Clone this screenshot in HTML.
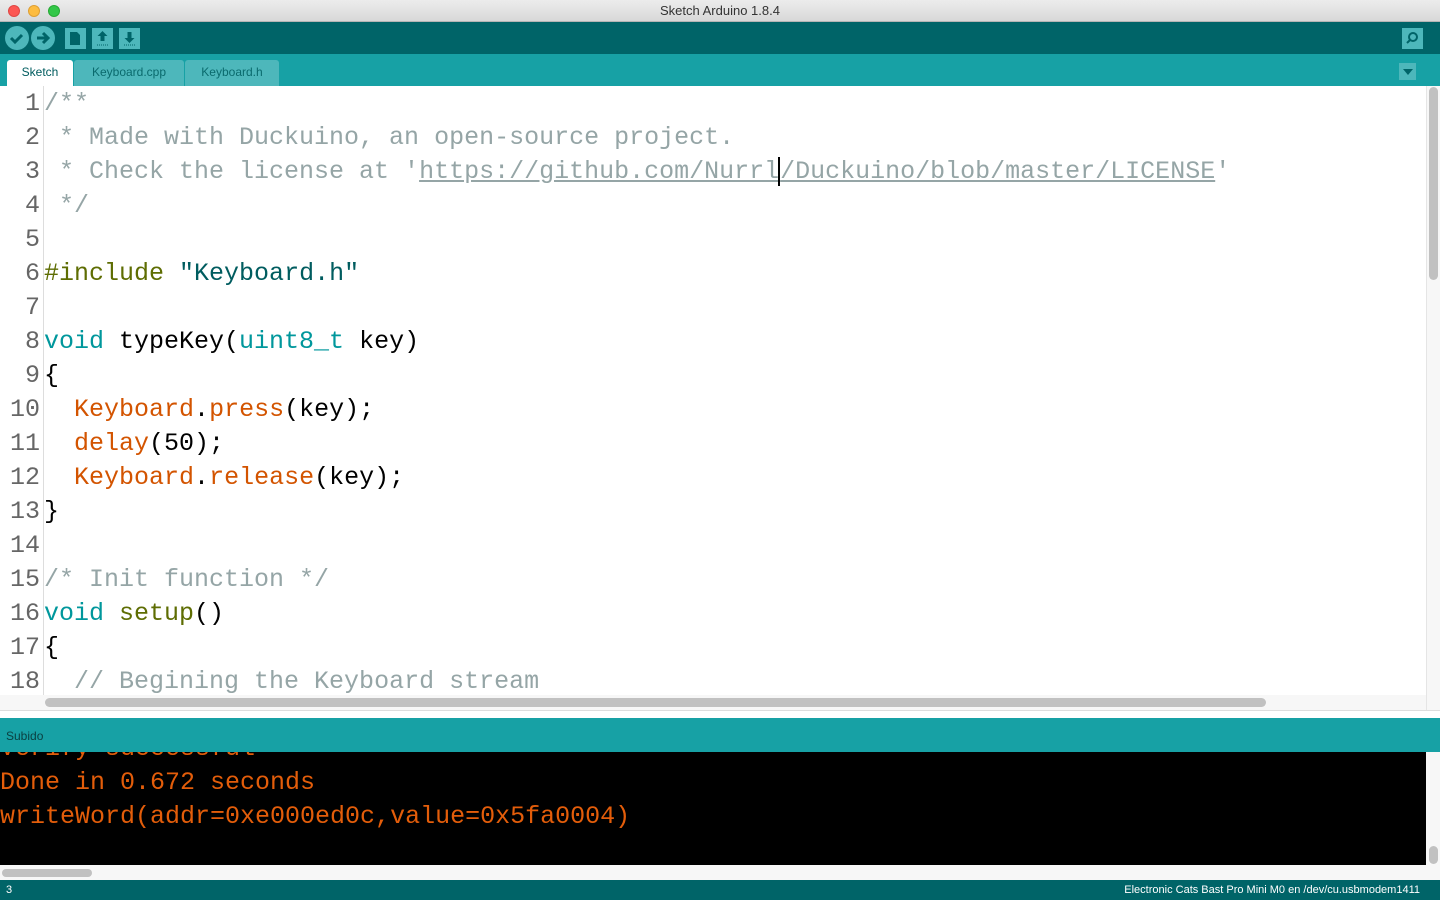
<!DOCTYPE html>
<html><head><meta charset="utf-8"><style>
*{margin:0;padding:0;box-sizing:border-box}
body{width:1440px;height:900px;overflow:hidden;background:#fff;font-family:"Liberation Sans",sans-serif;position:relative}
.title{position:absolute;top:0;left:0;width:1440px;height:22px;background:linear-gradient(#ececec,#d8d8d8);border-bottom:1px solid #b5b5b5;text-align:center;font-size:13px;line-height:22px;color:#333}
.dot{position:absolute;top:5px;width:12px;height:12px;border-radius:50%}
.tool{position:absolute;top:22px;left:0;width:1440px;height:32px;background:#006468}
.tabs{position:absolute;top:54px;left:0;width:1440px;height:32px;background:#17a1a5}
.tab{position:absolute;top:6px;height:26px;font-size:12px;line-height:24px;text-align:center;border-radius:3px 3px 0 0;color:#0a6a6d;background:#4db7bb}
.editor{position:absolute;top:86px;left:0;width:1426px;height:609px;overflow:hidden;background:#fff}
.gut{position:absolute;left:43px;top:0;width:1px;height:609px;background:#ddd}
.code{position:absolute;top:1px;left:0;font-family:"Liberation Mono",monospace;font-size:25px;line-height:34px;white-space:pre}
.ln{display:inline-block;width:40px;text-align:right;color:#666;margin-right:4px}
.c{color:#95a5a6}.k{color:#00979c}.f{color:#d35400}.p{color:#5e6d03}.s{color:#005c5f}
.cons{position:absolute;top:752px;left:0;width:1426px;height:113px;background:#000;overflow:hidden}
.cons pre{font-family:"Liberation Mono",monospace;font-size:25px;line-height:34px;color:#e35d0a;position:absolute;top:-20px;left:0}
</style></head><body>
<div class="title">Sketch Arduino 1.8.4
<div class="dot" style="left:8px;background:#fc5753;border:1px solid #df4744"></div>
<div class="dot" style="left:28px;background:#fdbc40;border:1px solid #de9f34"></div>
<div class="dot" style="left:48px;background:#33c748;border:1px solid #27aa35"></div>
</div>
<div class="tool">
<svg width="1440" height="32" style="position:absolute;left:0;top:0">
<circle cx="17" cy="16" r="12" fill="#4db7bb"/><path d="M11 16l4 4 7-7" stroke="#006468" stroke-width="3" fill="none"/>
<circle cx="43" cy="16" r="12" fill="#4db7bb"/><path d="M37 16h9M43 11l5 5-5 5" stroke="#006468" stroke-width="3" fill="none"/>
<rect x="65" y="6" width="21" height="21" fill="#4db7bb"/><path d="M70 10h7l3 3v10h-10z" fill="#006468"/>
<rect x="92" y="6" width="21" height="21" fill="#4db7bb"/><path d="M102.5 9l-5 5h3v5h4v-5h3z" fill="#006468"/><path d="M97 23h11" stroke="#006468" stroke-dasharray="1 1"/>
<rect x="119" y="6" width="21" height="21" fill="#4db7bb"/><path d="M129.5 21l-5-5h3v-6h4v6h3z" fill="#006468"/><path d="M124 23h11" stroke="#006468" stroke-dasharray="1 1"/>
<rect x="1402" y="6" width="21" height="21" fill="#4db7bb"/><circle cx="1413" cy="15" r="4" stroke="#006468" stroke-width="2" fill="none"/><path d="M1410 18l-3 3" stroke="#006468" stroke-width="2"/>
</svg></div>
<div class="tabs">
<div class="tab" style="left:7px;width:66px;background:#fff;color:#005c5f">Sketch</div>
<div class="tab" style="left:74px;width:110px">Keyboard.cpp</div>
<div class="tab" style="left:185px;width:94px">Keyboard.h</div>
<div style="position:absolute;left:1399px;top:9px;width:17px;height:17px;background:#4db7bb"></div>
<div style="position:absolute;left:1403px;top:15px;width:0;height:0;border-left:5px solid transparent;border-right:5px solid transparent;border-top:6px solid #006468"></div>
</div>
<div class="editor"><div class="gut"></div>
<div class="code"><span class="ln">1</span><span class="c">/**</span>
<span class="ln">2</span><span class="c"> * Made with Duckuino, an open-source project.</span>
<span class="ln">3</span><span class="c"> * Check the license at '<u>https://github.com/Nurrl</u><span style="border-left:2px solid #000;margin-left:-1px"></span><u>/Duckuino/blob/master/LICENSE</u>'</span>
<span class="ln">4</span><span class="c"> */</span>
<span class="ln">5</span>
<span class="ln">6</span><span class="p">#include</span> <span class="s">"Keyboard.h"</span>
<span class="ln">7</span>
<span class="ln">8</span><span class="k">void</span> typeKey(<span class="k">uint8_t</span> key)
<span class="ln">9</span>{
<span class="ln">10</span>  <span class="f">Keyboard</span>.<span class="f">press</span>(key);
<span class="ln">11</span>  <span class="f">delay</span>(50);
<span class="ln">12</span>  <span class="f">Keyboard</span>.<span class="f">release</span>(key);
<span class="ln">13</span>}
<span class="ln">14</span>
<span class="ln">15</span><span class="c">/* Init function */</span>
<span class="ln">16</span><span class="k">void</span> <span class="p">setup</span>()
<span class="ln">17</span>{
<span class="ln">18</span>  <span class="c">// Begining the Keyboard stream</span>
</div></div>
<div style="position:absolute;left:1426px;top:86px;width:14px;height:624px;background:#f7f7f7;border-left:1px solid #e5e5e5"></div>
<div style="position:absolute;left:1429px;top:87px;width:9px;height:193px;border-radius:5px;background:#c1c1c1"></div>
<div style="position:absolute;left:0;top:695px;width:1426px;height:15px;background:#f7f7f7"></div>
<div style="position:absolute;left:45px;top:698px;width:1221px;height:9px;border-radius:5px;background:#c1c1c1"></div>
<div style="position:absolute;left:0;top:710px;width:1440px;height:8px;background:#fff;border-top:1px solid #ddd"></div>
<div style="position:absolute;left:0;top:718px;width:1440px;height:34px;background:#17a1a5;font-size:12px;line-height:36px;padding-left:6px;color:#0b3f40">Subido</div>
<div class="cons"><pre>Verify successful
Done in 0.672 seconds
writeWord(addr=0xe000ed0c,value=0x5fa0004)</pre></div>
<div style="position:absolute;left:1426px;top:752px;width:14px;height:128px;background:#f7f7f7"></div>
<div style="position:absolute;left:1429px;top:846px;width:9px;height:18px;border-radius:5px;background:#c1c1c1"></div>
<div style="position:absolute;left:0;top:865px;width:1426px;height:15px;background:#f7f7f7"></div>
<div style="position:absolute;left:2px;top:869px;width:90px;height:8px;border-radius:4px;background:#c1c1c1"></div>
<div style="position:absolute;left:0;top:880px;width:1440px;height:20px;background:#006468;color:#fff;font-size:11px;line-height:21px">
<span style="position:absolute;left:6px">3</span>
<span style="position:absolute;right:20px">Electronic Cats Bast Pro Mini M0 en /dev/cu.usbmodem1411</span></div>
</body></html>
